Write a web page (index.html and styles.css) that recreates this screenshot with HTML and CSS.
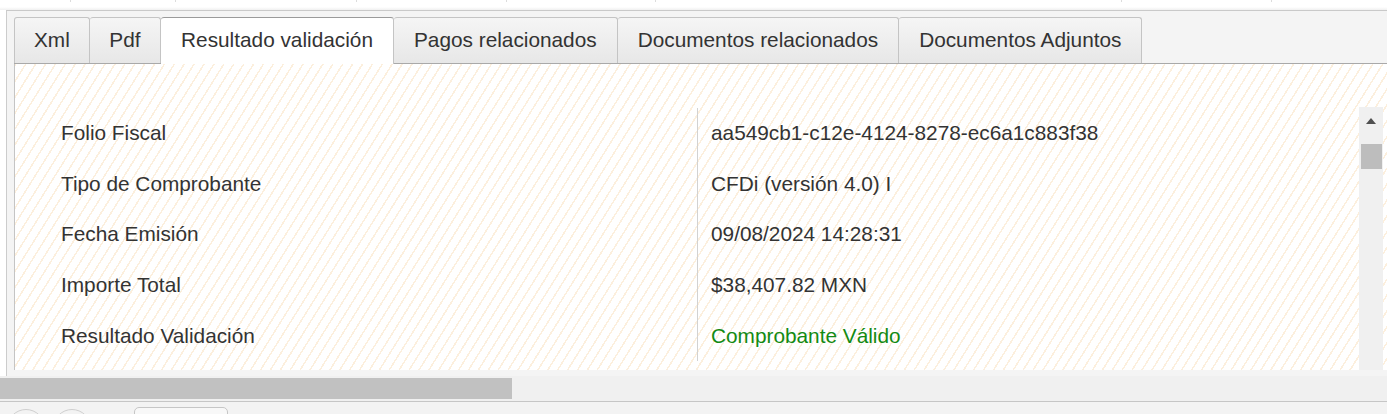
FILE: index.html
```html
<!DOCTYPE html>
<html lang="es">
<head>
<meta charset="utf-8">
<title>Resultado validación</title>
<link rel="stylesheet" href="styles.css">
</head>
<body>
<div class="topstrip">
  <span class="col w70"></span><span class="col w105"></span><span class="col w181"></span><span class="col w150"></span><span class="col w149"></span><span class="col w466"></span><span class="col w150"></span>
</div>
<div class="frame">
  <div class="panel">
    <div class="tabs">
      <div class="tab first">Xml</div>
      <div class="tab short">Pdf</div>
      <div class="tab active">Resultado validación</div>
      <div class="tab">Pagos relacionados</div>
      <div class="tab">Documentos relacionados</div>
      <div class="tab">Documentos Adjuntos</div>
    </div>
    <div class="content">
      <div class="scrollbox">
        <div class="table">
          <div class="row"><div class="label">Folio Fiscal</div><div class="value">aa549cb1-c12e-4124-8278-ec6a1c883f38</div></div>
          <div class="row"><div class="label">Tipo de Comprobante</div><div class="value">CFDi (versión 4.0) I</div></div>
          <div class="row"><div class="label">Fecha Emisión</div><div class="value">09/08/2024 14:28:31</div></div>
          <div class="row"><div class="label">Importe Total</div><div class="value">$38,407.82 MXN</div></div>
          <div class="row"><div class="label">Resultado Validación</div><div class="value ok">Comprobante Válido</div></div>
        </div>
        <div class="vscroll">
          <div class="arrow-up"></div>
          <div class="vthumb"></div>
        </div>
      </div>
    </div>
  </div>
</div>
<div class="hscroll"><div class="hthumb"></div></div>
<div class="toolbar">
  <span class="circle"></span>
  <span class="circle"></span>
  <span class="pill"></span>
</div>
</body>
</html>
```

FILE: styles.css
```css
html, body {
  margin: 0;
  padding: 0;
}
body {
  width: 1387px;
  height: 414px;
  overflow: hidden;
  background: #ffffff;
  font-family: "Liberation Sans", Arial, sans-serif;
  color: #333333;
}

/* faint strip at the top */
.topstrip {
  height: 10px;
  display: flex;
  background: linear-gradient(#ffffff 0, #ffffff 7px, #f0f0f0 10px);
}
.topstrip .col {
  height: 2px;
  border-right: 1px solid #dcdcdc;
  box-sizing: border-box;
}
.w70 { width: 71px; }
.w105 { width: 105px; }
.w181 { width: 181px; }
.w150 { width: 150px; }
.w149 { width: 149px; }
.w466 { width: 466px; }

/* outer frame */
.frame {
  height: 359px;
  border-top: 1px solid #c9c9c9;
  background: #f4f4f4;
  margin-left: 6px;
  border-left: 1px solid #cccccc;
  padding: 6px 0 0 7px;
  box-sizing: content-box;
  overflow: hidden;
}
.panel {
  width: 1400px;
}

/* tabs */
.tabs {
  display: flex;
  height: 46px;
  border-bottom: 1px solid #a9a9a9;
  box-sizing: content-box;
}
.tab {
  height: 46px;
  box-sizing: border-box;
  padding: 0 20px;
  line-height: 44px;
  font-size: 20.8px;
  color: #333333;
  white-space: nowrap;
  background: linear-gradient(#f5f5f5, #e7e7e7);
  border: 1px solid #c4c4c4;
  border-left: none;
  border-bottom: none;
  border-radius: 3px 3px 0 0;
}
.tab.first {
  border-left: 1px solid #c4c4c4;
  padding: 0 19px;
}
.tab.short {
  padding: 0 19.5px;
}
.tab.active {
  background: #ffffff;
  border-top-color: #9a9a9a;
  height: 47px;
  margin-bottom: -1px;
}

/* content panel */
.content {
  height: 306px;
  border-left: 1px solid #c4c4c4;
  box-sizing: border-box;
  padding: 44px 31px 0 32px;
  background-color: #ffffff;
  background-image: repeating-linear-gradient(122deg,
    #fcefdd 0, #fcefdd 1.5px, #ffffff 1.5px, #ffffff 8.4px);
}
.scrollbox {
  display: flex;
  height: 263px;
  margin-top: -1px;
}
.table {
  flex: 1;
  padding-top: 1px;
}
.row {
  display: flex;
  height: 50.6px;
  align-items: center;
  font-size: 20.8px;
}
.label {
  width: 651px;
  height: 100%;
  box-sizing: border-box;
  padding-left: 14px;
  display: flex;
  align-items: center;
  border-right: 1px solid #d2d2d2;
}
.value {
  padding-left: 13px;
}
.value.ok {
  color: #138a13;
}

/* vertical scrollbar */
.vscroll {
  width: 24px;
  background: #f0f0f0;
  display: flex;
  flex-direction: column;
  align-items: center;
}
.arrow-up {
  margin-top: 11px;
  width: 0;
  height: 0;
  border-left: 5px solid transparent;
  border-right: 5px solid transparent;
  border-bottom: 6px solid #505050;
}
.vthumb {
  margin-top: 20px;
  width: 21px;
  height: 25px;
  background: #bdbdbd;
}

/* horizontal scrollbar */
.hscroll {
  background: #f0f0f0;
  border-bottom: 1px solid #c6c6c6;
  padding-top: 2px;
  box-sizing: border-box;
  height: 26px;
}
.hthumb {
  width: 512px;
  height: 21px;
  background: #c1c1c1;
}

/* bottom toolbar */
.toolbar {
  height: 18px;
  background: #f3f3f3;
  display: flex;
  align-items: flex-start;
  padding-left: 7px;
  overflow: hidden;
}
.circle {
  width: 38px;
  height: 38px;
  border: 1px solid #cfcfcf;
  border-radius: 50%;
  box-sizing: border-box;
  margin-top: 7px;
  margin-right: 8px;
  flex: none;
}
.pill {
  margin-left: 35px;
  margin-top: 5px;
  width: 94px;
  height: 30px;
  border: 1px solid #c6c6c6;
  border-radius: 5px;
  background: #f8f8f8;
  box-sizing: border-box;
  flex: none;
}
```
